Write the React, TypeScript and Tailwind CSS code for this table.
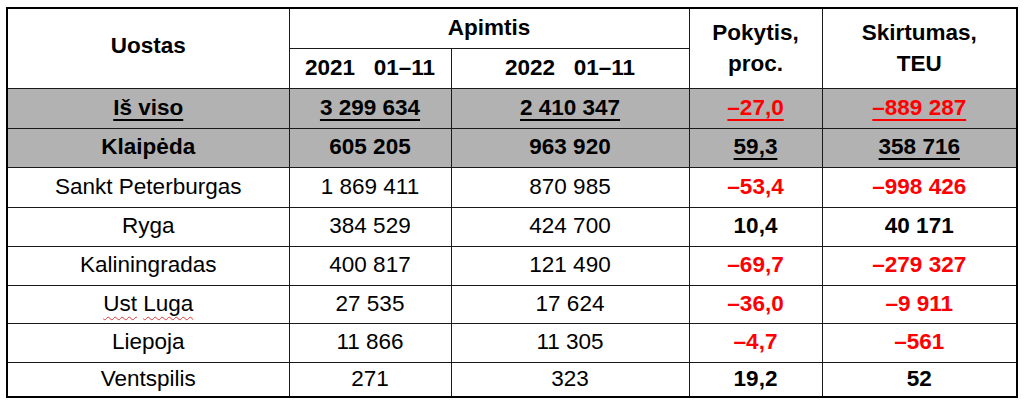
import React from 'react';

type Cell = { text: string; red?: boolean; bold?: boolean; u?: boolean };

interface Row {
    name: Cell;
    cells: Cell[];
    shaded?: boolean;
    h: string;
}

const rows: Row[] = [
    {
        name: { text: 'Iš viso', bold: true, u: true },
        cells: [
            { text: '3 299 634', bold: true, u: true },
            { text: '2 410 347', bold: true, u: true },
            { text: '–27,0', bold: true, u: true, red: true },
            { text: '–889 287', bold: true, u: true, red: true },
        ],
        shaded: true,
        h: 'h-[40px]',
    },
    {
        name: { text: 'Klaipėda', bold: true },
        cells: [
            { text: '605 205', bold: true },
            { text: '963 920', bold: true },
            { text: '59,3', bold: true, u: true },
            { text: '358 716', bold: true, u: true },
        ],
        shaded: true,
        h: 'h-[39px]',
    },
    {
        name: { text: 'Sankt Peterburgas' },
        cells: [
            { text: '1 869 411' },
            { text: '870 985' },
            { text: '–53,4', bold: true, red: true },
            { text: '–998 426', bold: true, red: true },
        ],
        h: 'h-[40px]',
    },
    {
        name: { text: 'Ryga' },
        cells: [
            { text: '384 529' },
            { text: '424 700' },
            { text: '10,4', bold: true },
            { text: '40 171', bold: true },
        ],
        h: 'h-[39px]',
    },
    {
        name: { text: 'Kaliningradas' },
        cells: [
            { text: '400 817' },
            { text: '121 490' },
            { text: '–69,7', bold: true, red: true },
            { text: '–279 327', bold: true, red: true },
        ],
        h: 'h-[39px]',
    },
    {
        name: { text: 'Ust Luga' },
        cells: [
            { text: '27 535' },
            { text: '17 624' },
            { text: '–36,0', bold: true, red: true },
            { text: '–9 911', bold: true, red: true },
        ],
        h: 'h-[38px]',
    },
    {
        name: { text: 'Liepoja' },
        cells: [
            { text: '11 866' },
            { text: '11 305' },
            { text: '–4,7', bold: true, red: true },
            { text: '–561', bold: true, red: true },
        ],
        h: 'h-[39px]',
    },
    {
        name: { text: 'Ventspilis' },
        cells: [
            { text: '271' },
            { text: '323' },
            { text: '19,2', bold: true },
            { text: '52', bold: true },
        ],
        h: 'h-[35px]',
    },
];

const cellText = (c: Cell) => {
    const cls = [
        c.bold ? 'font-bold' : 'font-normal',
        c.red ? 'text-[#ff0000]' : 'text-black',
        c.u ? 'underline decoration-2 underline-offset-[4px]' : '',
    ].join(' ');
    return <span className={cls}>{c.text}</span>;
};

// spell-check squiggle under each word, like the Word source
const Squiggly: React.FC<{ text: string }> = ({ text }) => (
    <span>
        {text.split(' ').map((w, i) => (
            <React.Fragment key={i}>
                {i > 0 && ' '}
                <span className="underline decoration-wavy decoration-[#e03a3a] decoration-1 underline-offset-[5px]">{w}</span>
            </React.Fragment>
        ))}
    </span>
);

const cell = 'border border-[#1a1a1a] text-center align-middle p-0';
const td = `${cell} leading-none`;

const App: React.FC = () => {
    return (
        <div className="w-[1024px] h-[405px] bg-white pl-[6px] pt-[7px] font-['Liberation_Sans',Arial,sans-serif] text-[22.5px] text-black">
            <table className="w-[1010px] border-collapse border-2 border-black table-fixed">
                <colgroup>
                    <col className="w-[282px]" />
                    <col className="w-[162px]" />
                    <col className="w-[238px]" />
                    <col className="w-[133px]" />
                    <col className="w-[195px]" />
                </colgroup>
                <thead>
                    <tr className="h-[40px]">
                        <th rowSpan={2} className={`${td} font-bold pb-[4px]`}>Uostas</th>
                        <th colSpan={2} className={`${td} font-bold`}>Apimtis</th>
                        <th rowSpan={2} className={`${cell} font-bold leading-[31px]`}>
                            Pokytis,
                            <br />
                            proc.
                        </th>
                        <th rowSpan={2} className={`${cell} font-bold leading-[31px]`}>
                            Skirtumas,
                            <br />
                            TEU
                        </th>
                    </tr>
                    <tr className="h-[40px]">
                        <th className={`${td} font-bold whitespace-pre`}>2021   01–11</th>
                        <th className={`${td} font-bold whitespace-pre`}>2022   01–11</th>
                    </tr>
                </thead>
                <tbody>
                    {rows.map((r, i) => (
                        <tr key={i} className={`${r.h} ${r.shaded ? 'bg-[#b2b2b2]' : 'bg-white'}`}>
                            <td className={td}>
                                {r.name.text === 'Ust Luga' ? <Squiggly text={r.name.text} /> : cellText(r.name)}
                            </td>
                            {r.cells.map((c, j) => (
                                <td key={j} className={td}>
                                    {cellText(c)}
                                </td>
                            ))}
                        </tr>
                    ))}
                </tbody>
            </table>
        </div>
    );
};

export default App;
